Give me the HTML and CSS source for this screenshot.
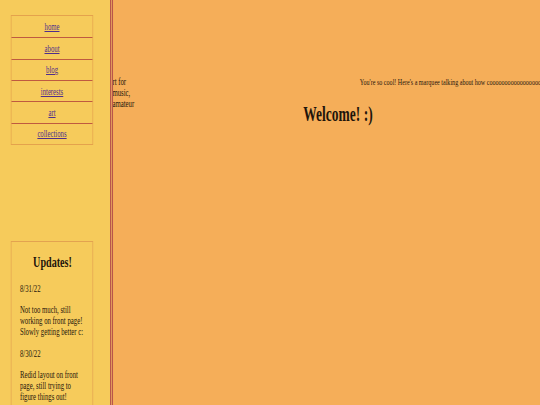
FILE: index.html
```html
<!DOCTYPE html>
<html lang="en">
<head>
<meta charset="utf-8">
<title>Welcome!</title>
<link rel="stylesheet" href="styles.css">
</head>
<body>
<div class="page">
  <aside class="sidebar">
    <ul class="nav">
      <li><a href="#">home</a></li>
      <li><a href="#">about</a></li>
      <li><a href="#">blog</a></li>
      <li><a href="#">interests</a></li>
      <li><a href="#">art</a></li>
      <li><a href="#">collections</a></li>
    </ul>
    <section class="updates">
      <h2>Updates!</h2>
      <p>8/31/22</p>
      <p>Not too much, still working on front page! Slowly getting better c:</p>
      <p>8/30/22</p>
      <p>Redid layout on front page, still trying to figure things out!</p>
    </section>
  </aside>
  <main class="main">
    <div class="intro">rt for music, amateur</div>
    <div class="content">
      <div class="marquee">You're so cool! Here's a marquee talking about how cooooooooooooooooooooooooooooooooool you are!</div>
      <h1 class="welcome">Welcome! :)</h1>
    </div>
  </main>
</div>
</body>
</html>
```
FILE: styles.css
```css
html, body {
  margin: 0;
  padding: 0;
  overflow: hidden;
  background: #f5ae59;
}

.page {
  width: 800px;
  height: 405px;
  transform: scaleX(0.675);
  transform-origin: 0 0;
  display: flex;
  overflow: hidden;
  background: #f5ae59;
  font-family: "Liberation Serif", "Times New Roman", serif;
  color: #1f150b;
}

.sidebar {
  flex: 0 0 163px;
  box-sizing: border-box;
  background: #f6cb5b;
  position: relative;
  z-index: 1;
  box-shadow: 1.48px 0 0 #b8544a, 2.96px 0 0 #e29a5c, 4.44px 0 0 #b8544a;
  padding: 15px 0 0 16.3px;
  display: flex;
  flex-direction: column;
}

.nav {
  list-style: none;
  margin: 0;
  padding: 0;
  width: 121.5px;
  box-sizing: border-box;
  border: 1px solid #e4a24c;
}

.nav li {
  height: 21.33px;
  box-sizing: border-box;
  display: flex;
  align-items: center;
  justify-content: center;
  font-size: 10px;
  line-height: 11px;
}

.nav li + li {
  border-top: 1px solid #bf5a40;
}

.nav a {
  color: #4f2e8c;
  text-decoration: underline;
}

.updates {
  margin-top: 96px;
  width: 121.5px;
  box-sizing: border-box;
  border: 1px solid #e3a350;
  padding: 0 7px 12px 12.3px;
}

.updates h2 {
  font-size: 15px;
  line-height: 17px;
  font-weight: bold;
  text-align: center;
  margin: 12px 0 12px -3.8px;
}

.updates p {
  font-size: 10px;
  line-height: 11px;
  margin: 10.5px 0;
}

.main {
  flex: 1;
  min-width: 0;
  display: flex;
}

.intro {
  flex: 0 0 34.9px;
  margin-left: 3.5px;
  padding-top: 76.3px;
  font-size: 10px;
  line-height: 11px;
}

.content {
  flex: 1;
  min-width: 0;
  padding-top: 77px;
}

.marquee {
  padding-left: 331.6px;
  font-size: 9px;
  line-height: 11px;
  white-space: nowrap;
  overflow: hidden;
}

.welcome {
  font-size: 20px;
  line-height: 23px;
  font-weight: bold;
  text-align: center;
  margin: 15.45px 0 0;
}
```
